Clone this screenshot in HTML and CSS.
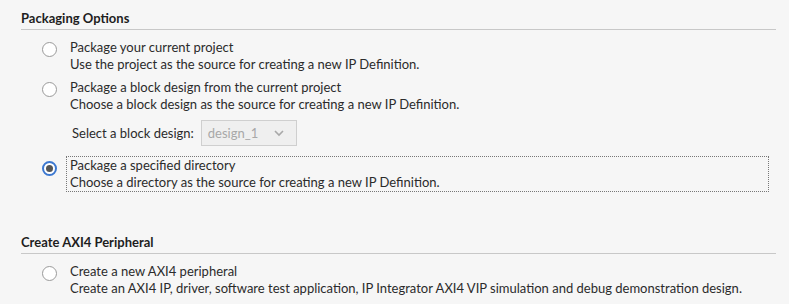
FILE: index.html
```html
<!DOCTYPE html>
<html lang="en">
<head>
    <meta charset="UTF-8">
    <title>Packaging Options</title>
    <link rel="stylesheet" href="styles.css">
</head>
<body>
    <div class="section">
        <h3 class="sectionTitle">Packaging Options</h3>
        <div class="options">
            <label class="option">
                <span class="radio"></span>
                <span class="optionText">
                    <span class="optionName">Package your current project</span>
                    <span class="optionDesc">Use the project as the source for creating a new IP Definition.</span>
                </span>
            </label>
            <label class="option">
                <span class="radio"></span>
                <span class="optionText">
                    <span class="optionName">Package a block design from the current project</span>
                    <span class="optionDesc">Choose a block design as the source for creating a new IP Definition.</span>
                </span>
            </label>
            <div class="designPicker">
                <span>Select a block design:</span>
                <span class="select">design_1
                    <svg width="12" height="8" viewBox="0 0 12 8"><path d="M2 2 L6 6 L10 2" fill="none" stroke="#a8a8a8" stroke-width="1.6"/></svg>
                </span>
            </div>
            <label class="option">
                <span class="radio checked"></span>
                <span class="optionText focused">
                    <span class="optionName">Package a specified directory</span>
                    <span class="optionDesc">Choose a directory as the source for creating a new IP Definition.</span>
                </span>
            </label>
        </div>
    </div>
    <div class="section second">
        <h3 class="sectionTitle">Create AXI4 Peripheral</h3>
        <div class="options">
            <label class="option">
                <span class="radio"></span>
                <span class="optionText">
                    <span class="optionName">Create a new AXI4 peripheral</span>
                    <span class="optionDesc">Create an AXI4 IP, driver, software test application, IP Integrator AXI4 VIP simulation and debug demonstration design.</span>
                </span>
            </label>
        </div>
    </div>
</body>
</html>
```

FILE: styles.css
```css
body {
    margin: 0;
    background-color: #f6f6f6;
    font-family: "Source Sans Pro", Lato, "Liberation Sans", sans-serif;
    font-size: 13px;
    color: #2b2b2b;
}

.section {
    padding: 10px 13px 0 21px;
}

.section.second {
    padding-top: 38px;
}

.sectionTitle {
    margin: 0;
    font-size: 13px;
    font-weight: bold;
    color: #1e1e1e;
    line-height: 17px;
    padding-bottom: 2px;
    border-bottom: 1px solid #c8c8c8;
}

.options {
    padding-top: 8px;
}

.option {
    display: flex;
    align-items: flex-start;
    margin-bottom: 4px;
}

.radio {
    width: 13px;
    height: 13px;
    border: 1px solid #9a9a9a;
    border-radius: 50%;
    background-color: #fff;
    margin: 4px 13px 0 21px;
    flex-shrink: 0;
    box-sizing: content-box;
    position: relative;
}

.radio.checked {
    border: 2px solid #3c78d0;
    width: 11px;
    height: 11px;
    margin-top: 5px;
}

.radio.checked::after {
    content: "";
    position: absolute;
    left: 2px;
    top: 2px;
    width: 7px;
    height: 7px;
    border-radius: 50%;
    background-color: #555;
}

.optionText {
    display: flex;
    flex-direction: column;
    line-height: 17px;
    border: 1px dotted transparent;
    padding: 0 3px;
    margin-left: -4px;
}

.optionText.focused {
    border-color: #777;
    flex: 1;
    margin-right: 7px;
}

.designPicker {
    display: flex;
    align-items: center;
    gap: 7px;
    margin: 6px 0 10px 51px;
}

.select {
    display: flex;
    align-items: center;
    justify-content: space-between;
    width: 77px;
    height: 24px;
    padding: 0 11px 0 6px;
    border: 1px solid #cfcfcf;
    background-color: #efefef;
    color: #a8a8a8;
}
```
